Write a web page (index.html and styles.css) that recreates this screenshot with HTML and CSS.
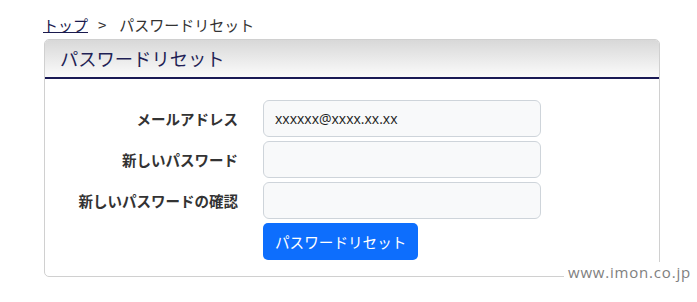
FILE: index.html
```html
<!DOCTYPE html>
<html lang="ja">
<head>
  <meta charset="UTF-8">
  <title>パスワードリセット</title>
  <meta name="viewport" content="width=device-width, initial-scale=1.0">
  <link rel="stylesheet" href="styles.css">
</head>
<body>
  <div id="page">
    <div class="breadcrumb">
      <a href="#">トップ</a><span class="sep">&gt;</span><span>パスワードリセット</span>
    </div>
    <div class="card">
      <div class="card-header">パスワードリセット</div>
      <form class="card-body">
        <label class="label" for="mail">メールアドレス</label>
        <input class="input" id="mail" type="text" value="xxxxxx@xxxx.xx.xx">
        <label class="label" for="pw">新しいパスワード</label>
        <input class="input" id="pw" type="password">
        <label class="label" for="pw2">新しいパスワードの確認</label>
        <input class="input" id="pw2" type="password">
        <div></div>
        <div><button class="btn" type="button">パスワードリセット</button></div>
      </form>
    </div>
  </div>
  <div id="watermark">www.imon.co.jp</div>
</body>
</html>
```

FILE: styles.css
```css
html, body {
  margin: 0;
  padding: 0;
  background: white;
  font-family: "Noto Sans CJK JP", "Noto Sans", sans-serif;
  color: #333;
}
#page {
  padding: 14px 37px 0 44px;
}
.breadcrumb {
  font-size: 15px;
  line-height: 22px;
  color: #333;
  margin-left: -1px;
  margin-bottom: 3px;
}
.breadcrumb a {
  color: #1a1a4e;
}
.breadcrumb .sep {
  margin: 0 13px 0 10px;
}
.card {
  border: 1px solid #d0d0d0;
  border-radius: 5px;
  overflow: hidden;
}
.card-header {
  height: 37px;
  line-height: 36px;
  padding-left: 15px;
  font-size: 18.3px;
  color: #1f1f55;
  background: linear-gradient(to bottom, #d8d8d8, #fbfbfb);
  border-bottom: 2px solid #1a1a55;
}
.card-body {
  display: grid;
  grid-template-columns: 193px 278px;
  column-gap: 25px;
  row-gap: 4px;
  padding: 21px 0 16px 0;
  margin: 0;
}
.label {
  font-size: 14.5px;
  font-weight: bold;
  text-align: right;
  align-self: center;
  color: #333;
}
.input {
  box-sizing: border-box;
  height: 37px;
  width: 278px;
  border: 1px solid #ced4da;
  border-radius: 6px;
  background: #f8f9fa;
  padding: 0 11px;
  font-family: "Open Sans", "Noto Sans", sans-serif;
  font-size: 14px;
  color: #222;
}
.btn {
  height: 37px;
  padding: 0 12px;
  background: #0d6efd;
  color: white;
  border: none;
  border-radius: 5px;
  font-family: "Noto Sans CJK JP", sans-serif;
  font-size: 14.6px;
}
#watermark {
  position: absolute;
  left: 564px;
  top: 262px;
  padding: 0 4px;
  background: white;
  color: #808080;
  font-family: "Open Sans", sans-serif;
  font-size: 15px;
  letter-spacing: 0.8px;
  line-height: 20px;
}
```
